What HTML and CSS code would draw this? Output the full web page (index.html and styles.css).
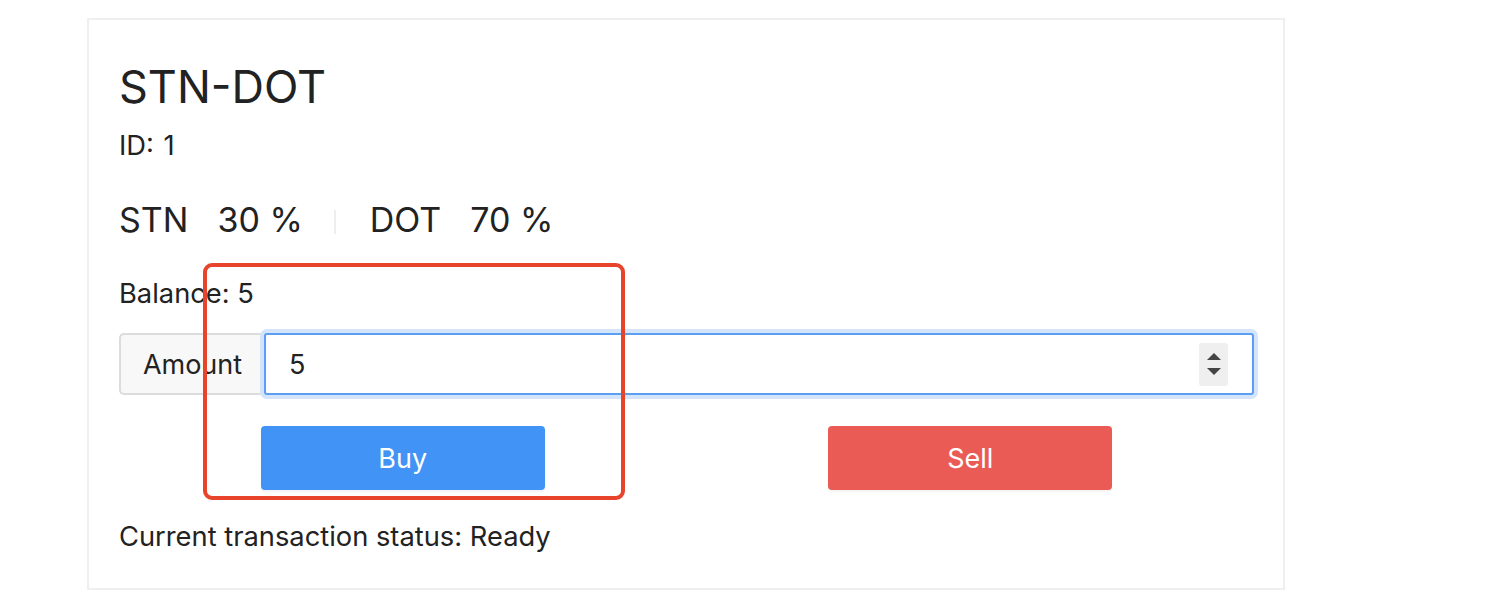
FILE: index.html
```html
<!DOCTYPE html>
<html lang="en">
<head>
<meta charset="utf-8">
<title>STN-DOT</title>
<link rel="stylesheet" href="styles.css">
</head>
<body>
<div class="card">
  <h1 class="title">STN-DOT</h1>
  <div class="id">ID: 1</div>
  <div class="stats">
    <div class="stat"><span class="stat-label">STN</span><span class="stat-value">30 %</span></div>
    <div class="stat-divider"></div>
    <div class="stat"><span class="stat-label">DOT</span><span class="stat-value">70 %</span></div>
  </div>
  <div class="balance">Balance: 5</div>
  <div class="input-group">
    <div class="input-label">Amount</div>
    <div class="input-field">
      <input class="input-control" type="text" value="5">
      <div class="spinner">
        <span class="arrow arrow-up"></span>
        <span class="arrow arrow-down"></span>
      </div>
    </div>
  </div>
  <div class="actions">
    <div class="action-cell"><button class="btn btn-buy">Buy</button></div>
    <div class="action-cell"><button class="btn btn-sell">Sell</button></div>
  </div>
  <div class="status">Current transaction status: Ready</div>
</div>
<div class="annotation"></div>
</body>
</html>
```
FILE: styles.css
```css
* { box-sizing: border-box; }
html, body { background: #ffffff; }
body {
  margin: 18px 0 0 87px;
  font-family: Inter, "Noto Sans", sans-serif;
  color: #222222;
  position: relative;
  width: 1417px;
  height: 598px;
}
.card {
  width: 1198px;
  border: 2px solid #efefef;
  padding: 41px 29px 35px 30px;
}
.title {
  margin: 0;
  font-size: 45px;
  line-height: 52px;
  font-weight: 400;
}
.id {
  margin-top: 17px;
  font-size: 27.3px;
  line-height: 32px;
  word-spacing: 2px;
}
.stats {
  margin-top: 36px;
  display: flex;
  align-items: center;
  font-size: 34px;
  line-height: 44px;
}
.stat { display: flex; gap: 29px; }
.stat-divider {
  width: 2px;
  height: 24px;
  margin: 4px 34px 0 31px;
  background: #eeeeee;
}
.balance {
  margin-top: 36px;
  font-size: 27.3px;
  line-height: 32px;
}
.input-group {
  margin-top: 23px;
  display: flex;
  height: 62px;
}
.input-label {
  width: 145px;
  flex: none;
  display: flex;
  align-items: center;
  justify-content: center;
  background: #f8f8f8;
  border: 2px solid #dcdcdc;
  border-right: none;
  border-radius: 5px 0 0 5px;
  font-size: 27px;
  color: #222;
}
.input-field {
  flex: 1;
  display: flex;
  align-items: center;
  border: 2px solid #5d9ef5;
  border-radius: 3px;
  box-shadow: 0 0 0 4px #d4e4fb;
  background: #fff;
  padding: 0 24px 0 23px;
}
.input-control {
  flex: 1;
  border: none;
  outline: none;
  background: transparent;
  font-family: Inter, "Noto Sans", sans-serif;
  font-size: 27px;
  color: #222;
  padding: 0;
}
.spinner {
  width: 29px;
  height: 43px;
  background: #efefef;
  border-radius: 3px;
  display: flex;
  flex-direction: column;
  align-items: center;
  justify-content: center;
  gap: 8px;
}
.arrow {
  width: 0;
  height: 0;
  border-left: 7px solid transparent;
  border-right: 7px solid transparent;
}
.arrow-up { border-bottom: 7px solid #444; }
.arrow-down { border-top: 7px solid #444; }
.actions {
  margin-top: 31px;
  display: grid;
  grid-template-columns: 1fr 1fr;
}
.action-cell { display: flex; justify-content: center; }
.btn {
  width: 284px;
  height: 64px;
  border: none;
  border-radius: 4px;
  color: #ffffff;
  font-family: Inter, "Noto Sans", sans-serif;
  font-size: 27px;
  box-shadow: 0 2px 2px rgba(0, 0, 0, 0.05);
}
.btn-buy { background: #4193f5; }
.btn-sell { background: #eb5b56; }
.status {
  margin-top: 31px;
  font-size: 27.3px;
  line-height: 32px;
}
.annotation {
  position: absolute;
  left: 116px;
  top: 245px;
  width: 422px;
  height: 237px;
  border: 4px solid #e8432b;
  border-radius: 9px;
  pointer-events: none;
}
```
